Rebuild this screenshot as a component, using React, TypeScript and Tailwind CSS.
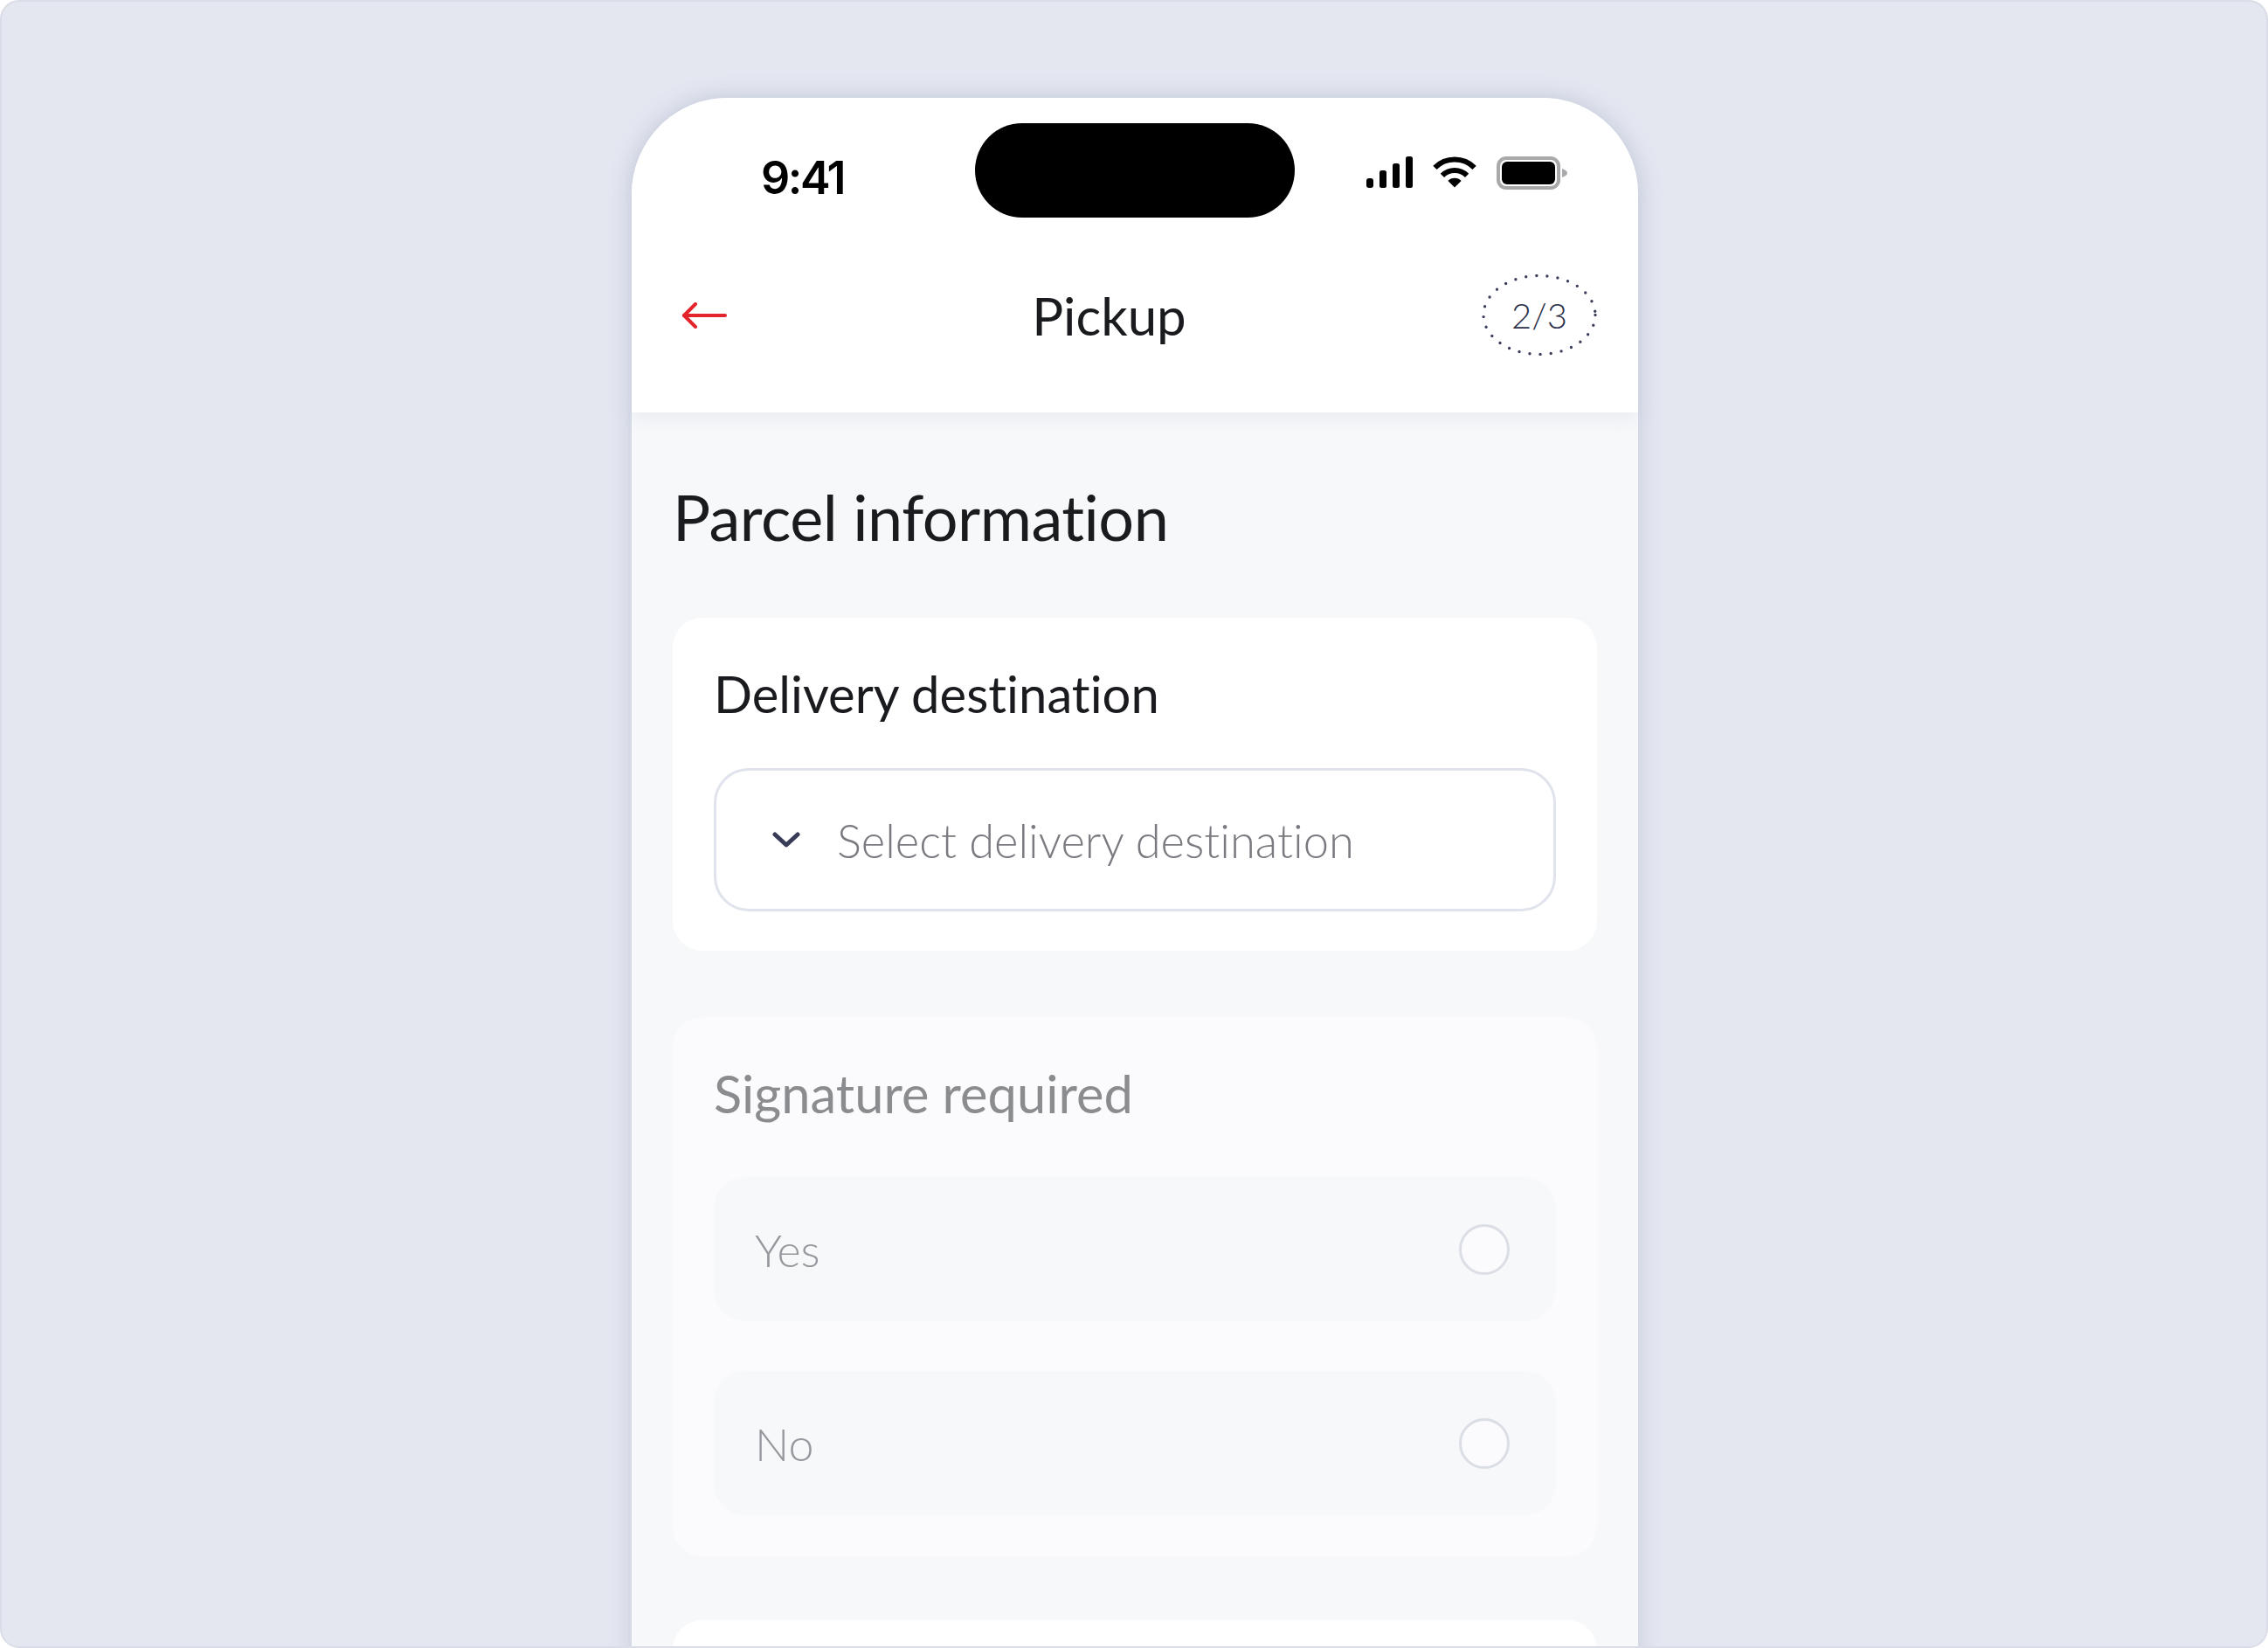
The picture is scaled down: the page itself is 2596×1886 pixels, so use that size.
export default function App() {
  const lato = "font-['Lato','Liberation_Sans',sans-serif] [font-variant-ligatures:none]";
  return (
    <div className="w-[2596px] h-[1886px] bg-white overflow-hidden">
      <div className={`w-full h-full bg-[#e4e7f0] rounded-[22px] border-2 border-[#dadde7] overflow-hidden pt-[110px] pl-[2px] flex flex-col items-center ${lato}`}>
        <div className="w-[1152px] shrink-0 bg-[#f7f8fa] rounded-t-[110px] shadow-[0_0_26px_rgba(120,130,165,0.28)]">
          <header className="relative z-10 h-[360px] bg-white rounded-t-[110px] shadow-[0_6px_22px_rgba(170,178,205,0.2)] pt-[29px] flex flex-col">
            <div className="grid grid-cols-[1fr_366px_1fr] h-[108px]">
              <div className="pl-[148px] pt-[31px] text-[52px] leading-[64px] tracking-[-2.4px] font-semibold text-black font-['Inter',sans-serif]">9:41</div>
              <div className="bg-black rounded-[54px]" />
              <div className="pl-[82px] pt-[38px] flex items-start">
                <svg width="53" height="36" viewBox="0 0 53 36" fill="#000">
                  <rect x="0" y="25" width="8" height="11" rx="3" />
                  <rect x="15" y="16" width="8" height="20" rx="2.5" />
                  <rect x="30" y="8" width="8" height="28" rx="2.5" />
                  <rect x="45" y="0" width="8" height="36" rx="2.5" />
                </svg>
                <svg className="ml-[23px]" width="50" height="36" viewBox="0 0 50 36" fill="none" stroke="#000" strokeWidth="6">
                  <path d="M2.4 12.9A32 32 0 0 1 47.6 12.9" />
                  <path d="M10.9 21.9A20 20 0 0 1 39.1 21.9" />
                  <path d="M25 35.5L17.4 27.9A10.7 10.7 0 0 1 32.6 27.9Z" fill="#000" stroke="none" />
                </svg>
                <svg className="ml-[23px]" width="81" height="38" viewBox="0 0 81 38">
                  <rect x="2" y="2" width="69" height="34" rx="9" fill="#fff" stroke="#a9a9ab" strokeWidth="4" />
                  <rect x="6" y="6" width="61" height="26" rx="6" fill="#000" />
                  <path d="M75 14c3 1 6 3 6 5s-3 4-6 5z" fill="#a9a9ab" />
                </svg>
              </div>
            </div>
            <div className="flex-1 flex items-center justify-between pl-[58px] pr-[47px]">
              <div className="w-[62px]">
                <svg width="51" height="30" viewBox="0 0 51 30" fill="none" stroke="#e3242b" strokeWidth="4" strokeLinecap="round" strokeLinejoin="round">
                  <path d="M2 15H49" />
                  <path d="M15 2L2 15L15 28" />
                </svg>
              </div>
              <div className="text-[60px] leading-[70px] text-[#1a1b1e]">Pickup</div>
              <div className="relative w-[132px] h-[93px] flex items-center justify-center text-[40px] font-light text-[#2c3049]">
                <svg className="absolute inset-0" width="132" height="93" viewBox="0 0 132 93" fill="none" stroke="#3b3f5c" strokeWidth="3.4" strokeLinecap="round" strokeDasharray="0 12.15">
                  <ellipse cx="66" cy="46.5" rx="64" ry="45" />
                </svg>
                <span className="relative">2/3</span>
              </div>
            </div>
          </header>

          <main className="px-[47px] pt-[75px]">
            <h1 className="text-[72px] leading-[88px] tracking-[-0.5px] font-normal text-[#1a1b1e] mb-[72px]">Parcel information</h1>

            <section className="bg-white rounded-[34px] pt-[48px] px-[47px] pb-[45px] mb-[76px]">
              <h2 className="text-[58px] leading-[78px] font-normal text-[#1a1b1e] mb-[46px]">Delivery destination</h2>
              <div className="h-[164px] rounded-[40px] border-[3px] border-[#e0e3ec] flex items-center pl-[64px]">
                <svg width="32" height="20" viewBox="0 0 32 20" fill="none" stroke="#383c56" strokeWidth="5" strokeLinecap="round" strokeLinejoin="round">
                  <path d="M3 4L16 16L29 4" />
                </svg>
                <span className="ml-[42px] text-[52.5px] leading-[72px] pt-[1px] font-light text-[#7a7b80]">Select delivery destination</span>
              </div>
            </section>

            <section className="bg-[#fbfbfd] rounded-[34px] pt-[48px] px-[47px] pb-[47px] mb-[73px]">
              <h2 className="text-[59.6px] leading-[78px] font-normal text-[#8b8c8f] mb-[57px]">Signature required</h2>
              <div className="flex flex-col gap-[57px]">
                {["Yes", "No"].map((label) => (
                  <div key={label} className="h-[165px] rounded-[36px] bg-[#f7f8fa] flex items-center justify-between pl-[47px] pr-[53px]">
                    <span className="text-[52px] font-light text-[#96989e]">{label}</span>
                    <span className="w-[58px] h-[58px] rounded-full border-[3px] border-[#dcdee6] bg-[#fbfbfd]" />
                  </div>
                ))}
              </div>
            </section>

            <section className="bg-white rounded-t-[34px] h-[120px]" />
          </main>
        </div>
      </div>
    </div>
  );
}
